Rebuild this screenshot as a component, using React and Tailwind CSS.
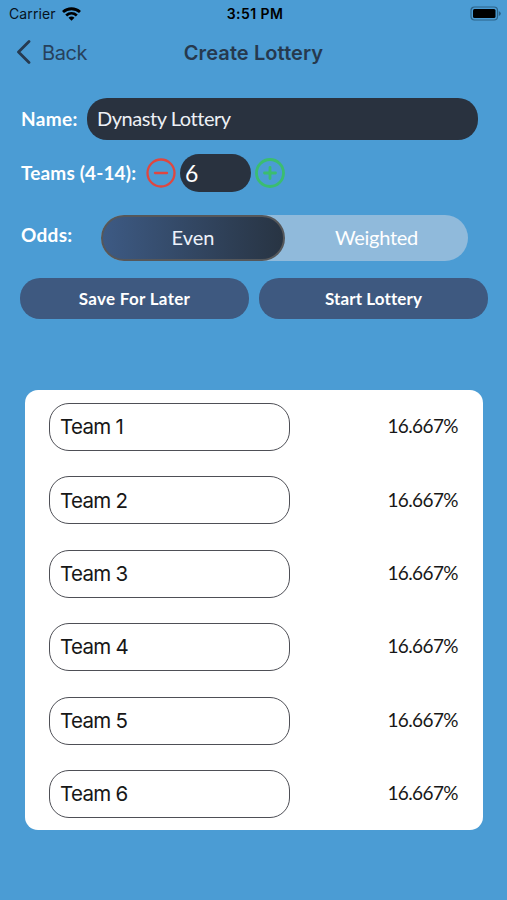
const teams = ['Team 1', 'Team 2', 'Team 3', 'Team 4', 'Team 5', 'Team 6'];

function StatusBar() {
  return (
    <div className="grid h-7 grid-cols-3 items-center pl-[9px] pr-[6px] text-[14px] leading-none text-[#07131e]">
      <div className="flex items-center gap-[6px]">
        <span className="tracking-[0.1px]">Carrier</span>
        <svg width="19" height="14" viewBox="0 0 19 14" fill="none" stroke="#000" strokeWidth="2.8">
          <path d="M1 5.1C5.8.6 13.2.6 18 5.1" />
          <path d="M4.2 8.5c3.1-2.8 7.5-2.8 10.6 0" />
          <path d="M9.5 13.8 6.5 10.7c1.8-1.5 4.2-1.5 6 0z" fill="#000" stroke="none" />
        </svg>
      </div>
      <span className="text-center text-[14px] font-semibold tracking-[0.45px] whitespace-nowrap text-black">3:51 PM</span>
      <svg className="mb-[2px] justify-self-end" width="31" height="15" viewBox="0 0 31 15">
        <rect x="1" y="1" width="26.5" height="13" rx="3.5" fill="none" stroke="#2c6287" strokeWidth="1.2" />
        <rect x="3" y="3" width="22.5" height="9" rx="1.5" fill="#000" />
        <path d="M28.8 5v5q2-1 2-2.5t-2-2.5z" fill="#2c6287" />
      </svg>
    </div>
  );
}

function NavBar() {
  return (
    <div className="grid h-12 grid-cols-[1fr_auto_1fr] items-center text-[20px] text-[#27415c]">
      <div className="flex items-center gap-[11px] pl-[16px]">
        <svg width="15" height="24" viewBox="0 0 15 24" fill="none" stroke="#263a50" strokeWidth="2.8" strokeLinecap="round" strokeLinejoin="round">
          <path d="M13 1.5 2.5 12 13 22.5" />
        </svg>
        <span className="pt-px tracking-[-0.4px]">Back</span>
      </div>
      <h1 className="pt-px text-[20px] font-semibold tracking-[0.1px] text-[#26394e]">Create Lottery</h1>
      <span />
    </div>
  );
}

function RoundButton({ color, plus }) {
  return (
    <svg width="30" height="30" viewBox="0 0 30 30" fill="none" stroke={color} strokeWidth={plus ? 2.8 : 2.3} strokeLinecap="round">
      <circle cx="15" cy="15" r="13.5" />
      <path d={plus ? 'M9.5 15h11M15 9.5v11' : 'M9 15h12'} />
    </svg>
  );
}

export default function App() {
  return (
    <main className="h-[900px] w-[507px] overflow-hidden bg-[#4b9cd4] font-['Inter',sans-serif]">
      <StatusBar />
      <NavBar />

      <form className="pt-[22px] font-['Lato',sans-serif] text-white">
        <div className="flex h-[42px] items-center pl-[21px]">
          <label className="w-[66px] text-[19px] font-bold tracking-[0.35px] whitespace-nowrap">Name:</label>
          <div className="flex h-[42px] w-[391px] items-center rounded-[20px] bg-[#29323f] pb-[2px] pl-[10px] text-[20px] tracking-[-0.45px] text-[#edf0f5]">Dynasty Lottery</div>
        </div>

        <div className="mt-[14px] flex h-[38px] items-center pl-[21px]">
          <label className="w-[125px] text-[19px] font-bold tracking-[0.15px] whitespace-nowrap">Teams (4-14):</label>
          <RoundButton color="#df4740" />
          <div className="mx-[4px] flex h-[38px] w-[71px] items-center rounded-[19px] bg-[#29323f] pl-[5px] text-[23px]">6</div>
          <RoundButton color="#3bbd70" plus />
        </div>

        <div className="mt-[23px] flex h-[46px] pl-[21px]">
          <label className="w-[80px] pt-[6px] text-[19px] font-bold tracking-[0.3px]">Odds:</label>
          <div className="flex w-[367px] rounded-[23px] bg-[#90badb] text-[20px]">
            <div className="flex w-[184px] items-center justify-center rounded-[23px] border-2 border-[#55575a] bg-linear-to-r from-[#3d5a84] to-[#283443] pb-[2px] text-[#edf2fa]">Even</div>
            <div className="flex flex-1 items-center justify-center pb-[2px] tracking-[-0.3px]">Weighted</div>
          </div>
        </div>

        <div className="mt-[17px] flex gap-[10px] pl-[20px] text-[17px] font-bold">
          <button type="button" className="h-[41px] w-[229px] rounded-[20px] bg-[#3e5980] tracking-[0.3px]">Save For Later</button>
          <button type="button" className="h-[41px] w-[229px] rounded-[20px] bg-[#3e5980] tracking-[0.1px]">Start Lottery</button>
        </div>
      </form>

      <section className="mt-[71px] ml-[25px] flex h-[440px] w-[458px] flex-col justify-between rounded-[13px] bg-white pt-[13px] pr-[25px] pb-[12px] pl-[24px] text-[#171717]">
        {teams.map((team) => (
          <div key={team} className="flex h-[48px] items-center justify-between">
            <div className="flex h-[48px] w-[241px] items-center rounded-[20px] border border-[#4e4f56] pt-px pl-[10px] text-[20.5px] tracking-[-0.7px]">{team}</div>
            <span className="pb-[1px] font-['Lato',sans-serif] text-[19px] tracking-[-0.6px]">16.667%</span>
          </div>
        ))}
      </section>
    </main>
  );
}
